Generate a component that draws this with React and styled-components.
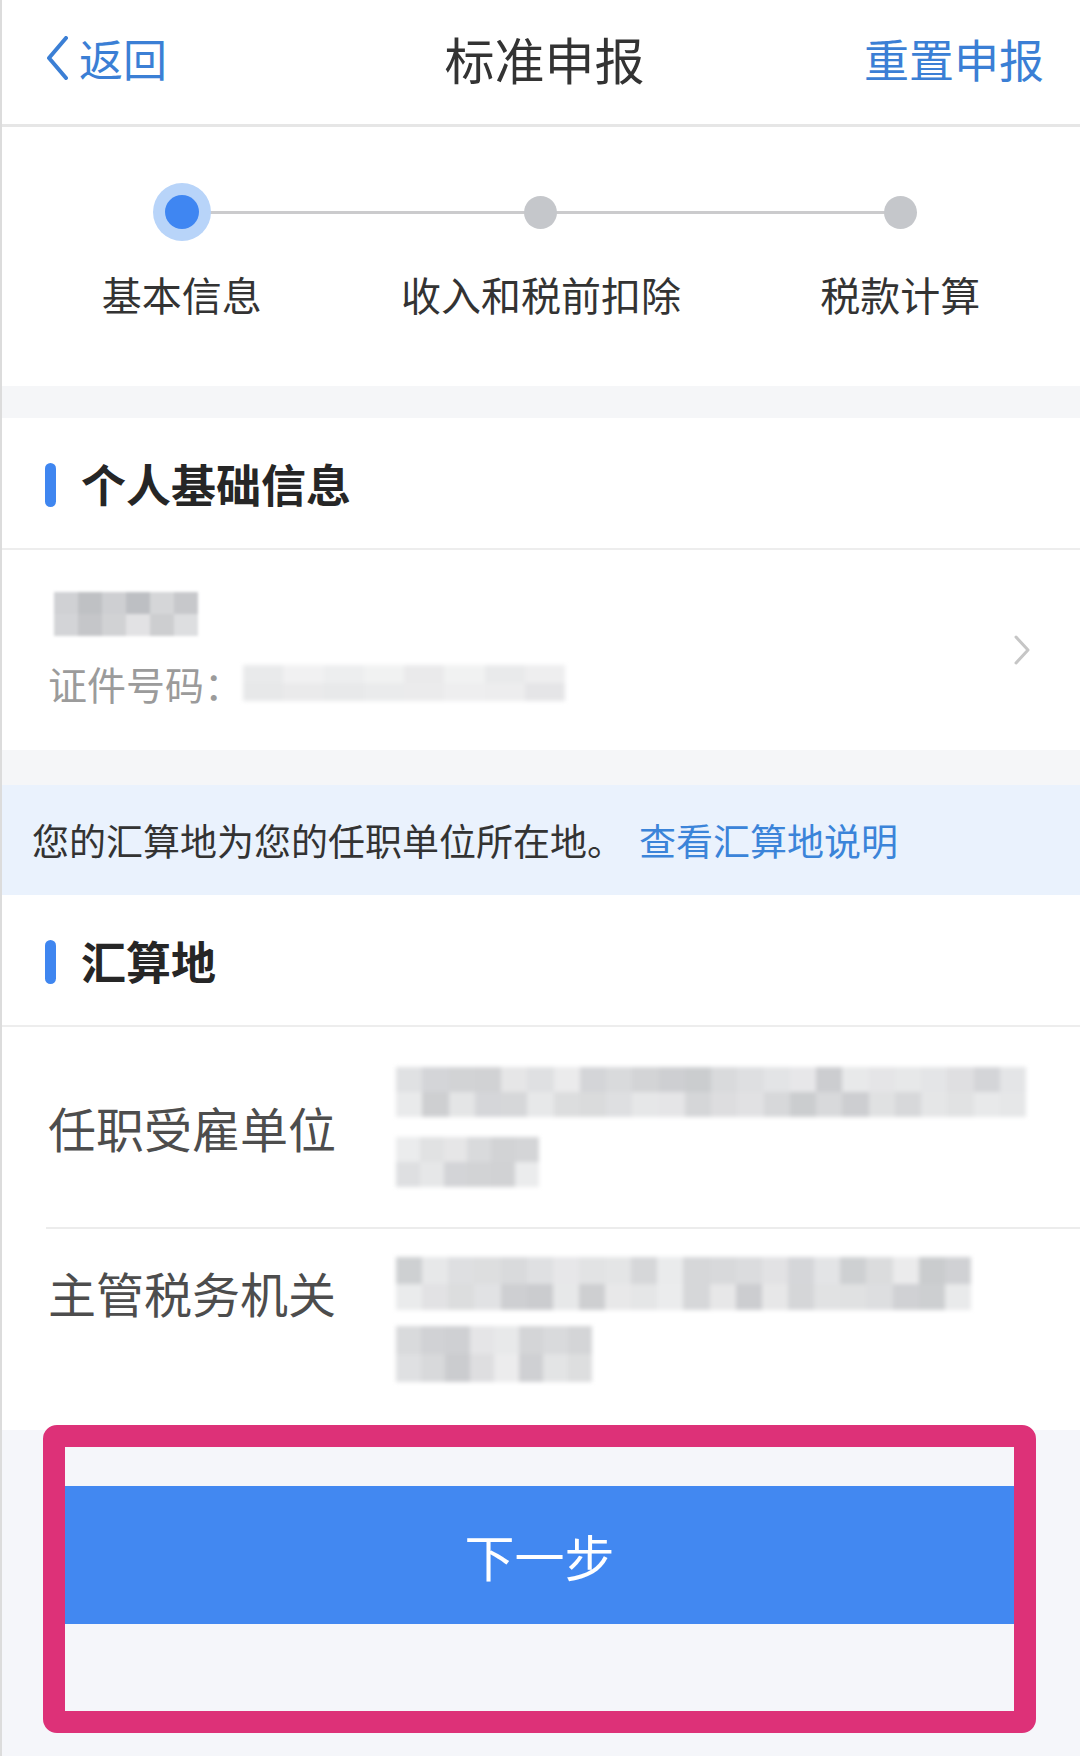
import React from 'react';
import styled, { createGlobalStyle, css } from 'styled-components';

const GlobalStyle = createGlobalStyle`
  html, body { margin: 0; padding: 0; background: #f5f6fa; }
  body {
    font-family: "Noto Sans CJK SC", "Noto Sans", sans-serif;
    -webkit-font-smoothing: antialiased;
  }
  * { box-sizing: border-box; }
`;

const Page = styled.div`
  width: 1080px;
  min-height: 1756px;
  background: #f5f6fa;
  border-left: 2px solid #dcdcdc;
  display: flex;
  flex-direction: column;
`;

/* ---------- nav bar ---------- */
const NavBar = styled.header`
  height: 127px;
  background: #fff;
  border-bottom: 3px solid #e6e6e6;
  display: grid;
  grid-template-columns: 1fr auto 1fr;
  align-items: center;
  padding: 0 36px 8px 43px;
`;

const BackButton = styled.div`
  display: flex;
  align-items: center;
  gap: 10px;
  color: #3b7fd5;
  font-size: 44px;
  line-height: 1;
`;

const NavTitle = styled.h1`
  margin: 0;
  font-size: 50px;
  font-weight: 400;
  color: #333;
  line-height: 1;
`;

const NavAction = styled.div`
  justify-self: end;
  color: #3b7fd5;
  font-size: 45px;
  line-height: 1;
`;

/* ---------- stepper ---------- */
const Stepper = styled.section`
  background: #fff;
  padding: 56px 0 66px;
`;

const Track = styled.div`
  position: relative;
  display: grid;
  grid-template-columns: repeat(3, 1fr);
  height: 58px;
  align-items: center;
  justify-items: center;
  &::before {
    content: '';
    position: absolute;
    left: 16.667%;
    right: 16.667%;
    top: 50%;
    height: 3px;
    margin-top: -1.5px;
    background: #cbcbcd;
  }
`;

const Dot = styled.span`
  position: relative;
  z-index: 1;
  width: 33px;
  height: 33px;
  border-radius: 50%;
  background: #c5c7cb;
  ${(p) =>
    p.$active &&
    css`
      width: 34px;
      height: 34px;
      background: #3f86f2;
      box-shadow: 0 0 0 12px #b8d4f9;
    `}
`;

const StepLabels = styled.div`
  display: grid;
  grid-template-columns: repeat(3, 1fr);
  justify-items: center;
  margin-top: 27px;
`;

const StepLabel = styled.span`
  font-size: 40px;
  line-height: 52px;
  color: #333;
`;

/* ---------- generic ---------- */
const Spacer = styled.div`
  height: ${(p) => p.$h}px;
  background: #f5f6f8;
`;

const SectionHeader = styled.div`
  height: 132px;
  background: #fff;
  border-bottom: 2px solid #ededed;
  display: flex;
  align-items: center;
  gap: 25px;
  padding: 0 0 0 43px;
`;

const AccentBar = styled.span`
  width: 11px;
  height: 44px;
  border-radius: 6px;
  background: #3f86f0;
  margin-top: 4px;
`;

const SectionTitle = styled.h2`
  margin: 0;
  font-size: 45px;
  font-weight: 700;
  color: #262626;
  line-height: 1;
`;

/* ---------- person row ---------- */
const PersonRow = styled.div`
  height: 200px;
  background: #fff;
  display: flex;
  align-items: center;
  justify-content: space-between;
  padding: 0 49px 0 46px;
`;

const PersonInfo = styled.div`
  display: flex;
  flex-direction: column;
  gap: 22px;
`;

const NameWrap = styled.div`
  margin-left: 6px;
`;

const IdLine = styled.div`
  display: flex;
  align-items: center;
  font-size: 39px;
  line-height: 50px;
  color: #9b9b9b;
`;

/* ---------- mosaic (redacted text) ---------- */
const MosaicGrid = styled.div`
  display: grid;
  grid-auto-flow: column;
  grid-template-rows: repeat(${(p) => p.$rows}, 1fr);
  width: ${(p) => p.$w}px;
  height: ${(p) => p.$h}px;
  filter: blur(${(p) => p.$blur}px);
`;

const MosaicCell = styled.span`
  display: block;
`;

function rand(seed) {
  let s = seed;
  return () => {
    s = (s * 9301 + 49297) % 233280;
    return s / 233280;
  };
}

function Mosaic({ w, h, rows = 2, cell = 26, seed = 1, min = 80, max = 93, blur = 2 }) {
  const cols = Math.max(1, Math.round(w / cell));
  const r = rand(seed);
  const cells = [];
  for (let i = 0; i < cols * rows; i++) {
    const l = min + r() * (max - min);
    cells.push(<MosaicCell key={i} style={{ background: `hsl(220, 4%, ${l.toFixed(1)}%)` }} />);
  }
  return (
    <MosaicGrid $w={w} $h={h} $rows={rows} $blur={blur}>
      {cells}
    </MosaicGrid>
  );
}

/* ---------- notice ---------- */
const Notice = styled.div`
  height: 110px;
  background: #eaf2fd;
  display: flex;
  align-items: center;
  padding-left: 30px;
  font-size: 37px;
  color: #333;
`;

const NoticeLink = styled.span`
  margin-left: 15px;
  color: #3b84d9;
`;

/* ---------- fields ---------- */
const FieldRow = styled.div`
  background: #fff;
  padding-left: 44px;
`;

const FieldBody = styled.div`
  display: flex;
  min-height: ${(p) => (p.$divider ? 203 : 200)}px;
  align-items: ${(p) => (p.$top ? 'flex-start' : 'center')};
  padding-top: ${(p) => (p.$top ? 28 : 0)}px;
  ${(p) => p.$divider && 'border-top: 2px solid #ececec;'}
`;

const FieldLabel = styled.div`
  width: 350px;
  padding-left: 2px;
  font-size: 48px;
  line-height: 62px;
  color: #4d4d4d;
  margin-top: ${(p) => (p.$top ? 4 : 0)}px;
`;

const FieldValue = styled.div`
  display: flex;
  flex-direction: column;
  gap: ${(p) => p.$gap}px;
`;

/* ---------- footer ---------- */
const Footer = styled.footer`
  flex: 1;
  background: #f5f6fa;
  padding: 0 44px 20px 41px;
  display: flex;
  flex-direction: column;
`;

const HighlightFrame = styled.div`
  margin-top: -5px;
  border: 22px solid #dd3178;
  border-radius: 14px;
  background: #f5f6fa;
  padding: 39px 0 87px;
`;

const PrimaryButton = styled.button`
  display: flex;
  align-items: center;
  justify-content: center;
  width: 100%;
  height: 138px;
  border: none;
  background: #4288f1;
  color: #fff;
  font-family: inherit;
  font-size: 50px;
  letter-spacing: 0;
  padding: 0;
`;

const ChevronLeft = () => (
  <svg width="24" height="44" viewBox="0 0 24 44" fill="none">
    <path d="M21 2 L4 22 L21 42" stroke="#3b7fd5" strokeWidth="4" strokeLinecap="round" strokeLinejoin="round" />
  </svg>
);

const ChevronRight = () => (
  <svg width="18" height="30" viewBox="0 0 18 30" fill="none">
    <path d="M3 2 L15 15 L3 28" stroke="#c6c6c6" strokeWidth="3" strokeLinecap="round" strokeLinejoin="round" />
  </svg>
);

export default function App() {
  const steps = ['基本信息', '收入和税前扣除', '税款计算'];
  return (
    <>
      <GlobalStyle />
      <Page>
        <NavBar>
          <BackButton>
            <ChevronLeft />
            <span>返回</span>
          </BackButton>
          <NavTitle>标准申报</NavTitle>
          <NavAction>重置申报</NavAction>
        </NavBar>

        <Stepper>
          <Track>
            {steps.map((s, i) => (
              <Dot key={s} $active={i === 0} />
            ))}
          </Track>
          <StepLabels>
            {steps.map((s) => (
              <StepLabel key={s}>{s}</StepLabel>
            ))}
          </StepLabels>
        </Stepper>

        <Spacer $h={32} />

        <SectionHeader>
          <AccentBar />
          <SectionTitle>个人基础信息</SectionTitle>
        </SectionHeader>

        <PersonRow>
          <PersonInfo>
            <NameWrap>
              <Mosaic w={144} h={44} rows={2} cell={24} seed={7} min={74} max={91} blur={1.5} />
            </NameWrap>
            <IdLine>
              <span>证件号码：</span>
              <Mosaic w={322} h={36} rows={2} cell={40} seed={3} min={90} max={95} blur={2} />
            </IdLine>
          </PersonInfo>
          <ChevronRight />
        </PersonRow>

        <Spacer $h={35} />

        <Notice>
          您的汇算地为您的任职单位所在地。
          <NoticeLink>查看汇算地说明</NoticeLink>
        </Notice>

        <SectionHeader>
          <AccentBar />
          <SectionTitle>汇算地</SectionTitle>
        </SectionHeader>

        <FieldRow>
          <FieldBody>
            <FieldLabel>任职受雇单位</FieldLabel>
            <FieldValue $gap={20}>
              <Mosaic w={630} h={50} seed={11} />
              <Mosaic w={143} h={50} seed={19} />
            </FieldValue>
          </FieldBody>
          <FieldBody $divider $top>
            <FieldLabel $top>主管税务机关</FieldLabel>
            <FieldValue $gap={16}>
              <Mosaic w={575} h={53} seed={23} />
              <Mosaic w={196} h={56} seed={31} />
            </FieldValue>
          </FieldBody>
        </FieldRow>

        <Footer>
          <HighlightFrame>
            <PrimaryButton>下一步</PrimaryButton>
          </HighlightFrame>
        </Footer>
      </Page>
    </>
  );
}
